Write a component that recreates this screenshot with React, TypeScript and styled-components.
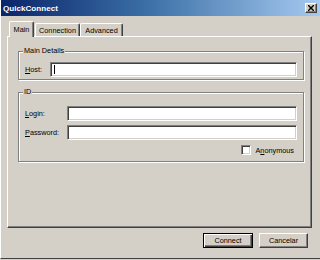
import styled, { createGlobalStyle } from 'styled-components';

const GlobalStyle = createGlobalStyle`
  html, body {
    margin: 0;
    padding: 0;
    background: #d4d0c8;
  }
  body {
    font-family: 'Liberation Sans', Arial, sans-serif;
    font-size: 7.3px;
    color: #000;
  }
`;

const raised = `
  border-top: 1px solid #ffffff;
  border-left: 1px solid #ffffff;
  border-right: 1px solid #404040;
  border-bottom: 1px solid #404040;
  box-shadow: inset -1px -1px 0 #808080;
`;

const Window = styled.div`
  width: 319px;
  height: 258px;
  background: #d4d0c8;
  border-left: 1px solid #ffffff;
  border-bottom: 1px solid #404040;
  display: flex;
  flex-direction: column;
`;

const TitleBar = styled.div`
  height: 16px;
  padding: 0 3px 0 2px;
  display: flex;
  align-items: center;
  justify-content: space-between;
  background: linear-gradient(to right, #0a246a 0%, #3a6ea5 45%, #a6caf0 100%);
`;

const Title = styled.span`
  color: #ffffff;
  font-weight: bold;
  font-size: 8.1px;
`;

const CloseButton = styled.div`
  width: 12px;
  height: 10px;
  box-sizing: border-box;
  background: #d4d0c8;
  ${raised}
  display: flex;
  align-items: center;
  justify-content: center;
`;

const Content = styled.div`
  padding: 5px 0 0 6px;
  display: flex;
  flex-direction: column;
`;

const TabStrip = styled.div`
  height: 15px;
  padding-left: 2px;
  display: flex;
  align-items: flex-end;
`;

const Tab = styled.div<{ $active?: boolean; $w: number }>`
  position: relative;
  box-sizing: border-box;
  width: ${({ $w }) => $w}px;
  height: ${({ $active }) => ($active ? 16 : 13)}px;
  margin-bottom: ${({ $active }) => ($active ? -1 : 0)}px;
  margin-right: ${({ $active }) => ($active ? 1 : 0)}px;
  z-index: ${({ $active }) => ($active ? 2 : 1)};
  background: #d4d0c8;
  border-top: 1px solid #ffffff;
  border-left: 1px solid #ffffff;
  border-right: 1px solid #404040;
  box-shadow: inset -1px 0 0 #808080;
  border-radius: 2px 2px 0 0;
  display: flex;
  align-items: ${({ $active }) => ($active ? 'flex-start' : 'center')};
  padding-top: ${({ $active }) => ($active ? 3 : 0)}px;
  justify-content: center;
`;

const Panel = styled.div`
  width: 305px;
  height: 192px;
  box-sizing: border-box;
  border-top: 1px solid #ffffff;
  border-left: 1px solid #ffffff;
  border-right: 1px solid #404040;
  border-bottom: 1px solid #404040;
  box-shadow: inset -1px -1px 0 #808080;
  padding: 14px 7px 0 10px;
  display: flex;
  flex-direction: column;
`;

const GroupBox = styled.div<{ $top?: number }>`
  border: 1px solid #808080;
  box-shadow: 1px 1px 0 #ffffff, inset 1px 1px 0 #ffffff;
  margin-top: ${({ $top }) => $top ?? 0}px;
  padding: 0 6px 2px 6px;
  display: flex;
  flex-direction: column;
`;

const Caption = styled.div`
  align-self: flex-start;
  height: 10px;
  line-height: 10px;
  margin: -6px 0 0 -2px;
  padding: 0 1px;
  background: #d4d0c8;
`;

const Row = styled.div<{ $top: number }>`
  display: flex;
  align-items: center;
  margin-top: ${({ $top }) => $top}px;
`;

const Label = styled.label<{ $w: number }>`
  width: ${({ $w }) => $w}px;
  flex: none;
`;

const Field = styled.div`
  flex: 1;
  height: 15px;
  box-sizing: border-box;
  background: #ffffff;
  border-top: 1px solid #808080;
  border-left: 1px solid #808080;
  border-right: 1px solid #ffffff;
  border-bottom: 1px solid #ffffff;
  box-shadow: inset 1px 1px 0 #404040, inset -1px -1px 0 #d4d0c8;
  display: flex;
  align-items: center;
  padding-left: 3px;
`;

const Caret = styled.span`
  width: 1px;
  height: 9px;
  background: #000;
`;

const CheckRow = styled.div`
  display: flex;
  justify-content: flex-end;
  align-items: center;
  gap: 4px;
  margin-top: 5px;
  padding: 0 3px 4px 0;
`;

const CheckBox = styled.span`
  width: 10px;
  height: 10px;
  box-sizing: border-box;
  background: #ffffff;
  border-top: 1px solid #808080;
  border-left: 1px solid #808080;
  border-right: 1px solid #ffffff;
  border-bottom: 1px solid #ffffff;
  box-shadow: inset 1px 1px 0 #404040, inset -1px -1px 0 #d4d0c8;
`;

const ButtonRow = styled.div`
  width: 301px;
  display: flex;
  justify-content: flex-end;
  gap: 6px;
  margin-top: 5px;
`;

const Button = styled.div<{ $default?: boolean }>`
  width: ${({ $default }) => ($default ? 50 : 49)}px;
  height: 15px;
  box-sizing: border-box;
  display: flex;
  align-items: center;
  justify-content: center;
  background: #d4d0c8;
  ${({ $default }) =>
    $default
      ? `border: 1px solid #000000;
         box-shadow: inset 1px 1px 0 #ffffff, inset -1px -1px 0 #404040, inset -2px -2px 0 #808080;`
      : raised}
`;

const U = styled.span`
  text-decoration: underline;
`;

export default function App() {
  return (
    <>
      <GlobalStyle />
      <Window>
        <TitleBar>
          <Title>QuickConnect</Title>
          <CloseButton>
            <svg width="6" height="6" viewBox="0 0 6 6">
              <path d="M0 0L6 6M6 0L0 6" stroke="#000" strokeWidth="1.4" />
            </svg>
          </CloseButton>
        </TitleBar>
        <Content>
          <TabStrip>
            <Tab $active $w={25}>Main</Tab>
            <Tab $w={45}>Connection</Tab>
            <Tab $w={43}>Advanced</Tab>
          </TabStrip>
          <Panel>
            <GroupBox>
              <Caption>Main Details</Caption>
              <Row $top={6}>
                <Label $w={25}>
                  <U>H</U>ost:
                </Label>
                <Field>
                  <Caret />
                </Field>
              </Row>
            </GroupBox>
            <GroupBox $top={12}>
              <Caption>ID</Caption>
              <Row $top={9}>
                <Label $w={42}>
                  <U>L</U>ogin:
                </Label>
                <Field />
              </Row>
              <Row $top={4}>
                <Label $w={42}>
                  <U>P</U>assword:
                </Label>
                <Field />
              </Row>
              <CheckRow>
                <CheckBox />
                <span>
                  A<U>n</U>onymous
                </span>
              </CheckRow>
            </GroupBox>
          </Panel>
          <ButtonRow>
            <Button $default>Connect</Button>
            <Button>Cancelar</Button>
          </ButtonRow>
        </Content>
      </Window>
    </>
  );
}
